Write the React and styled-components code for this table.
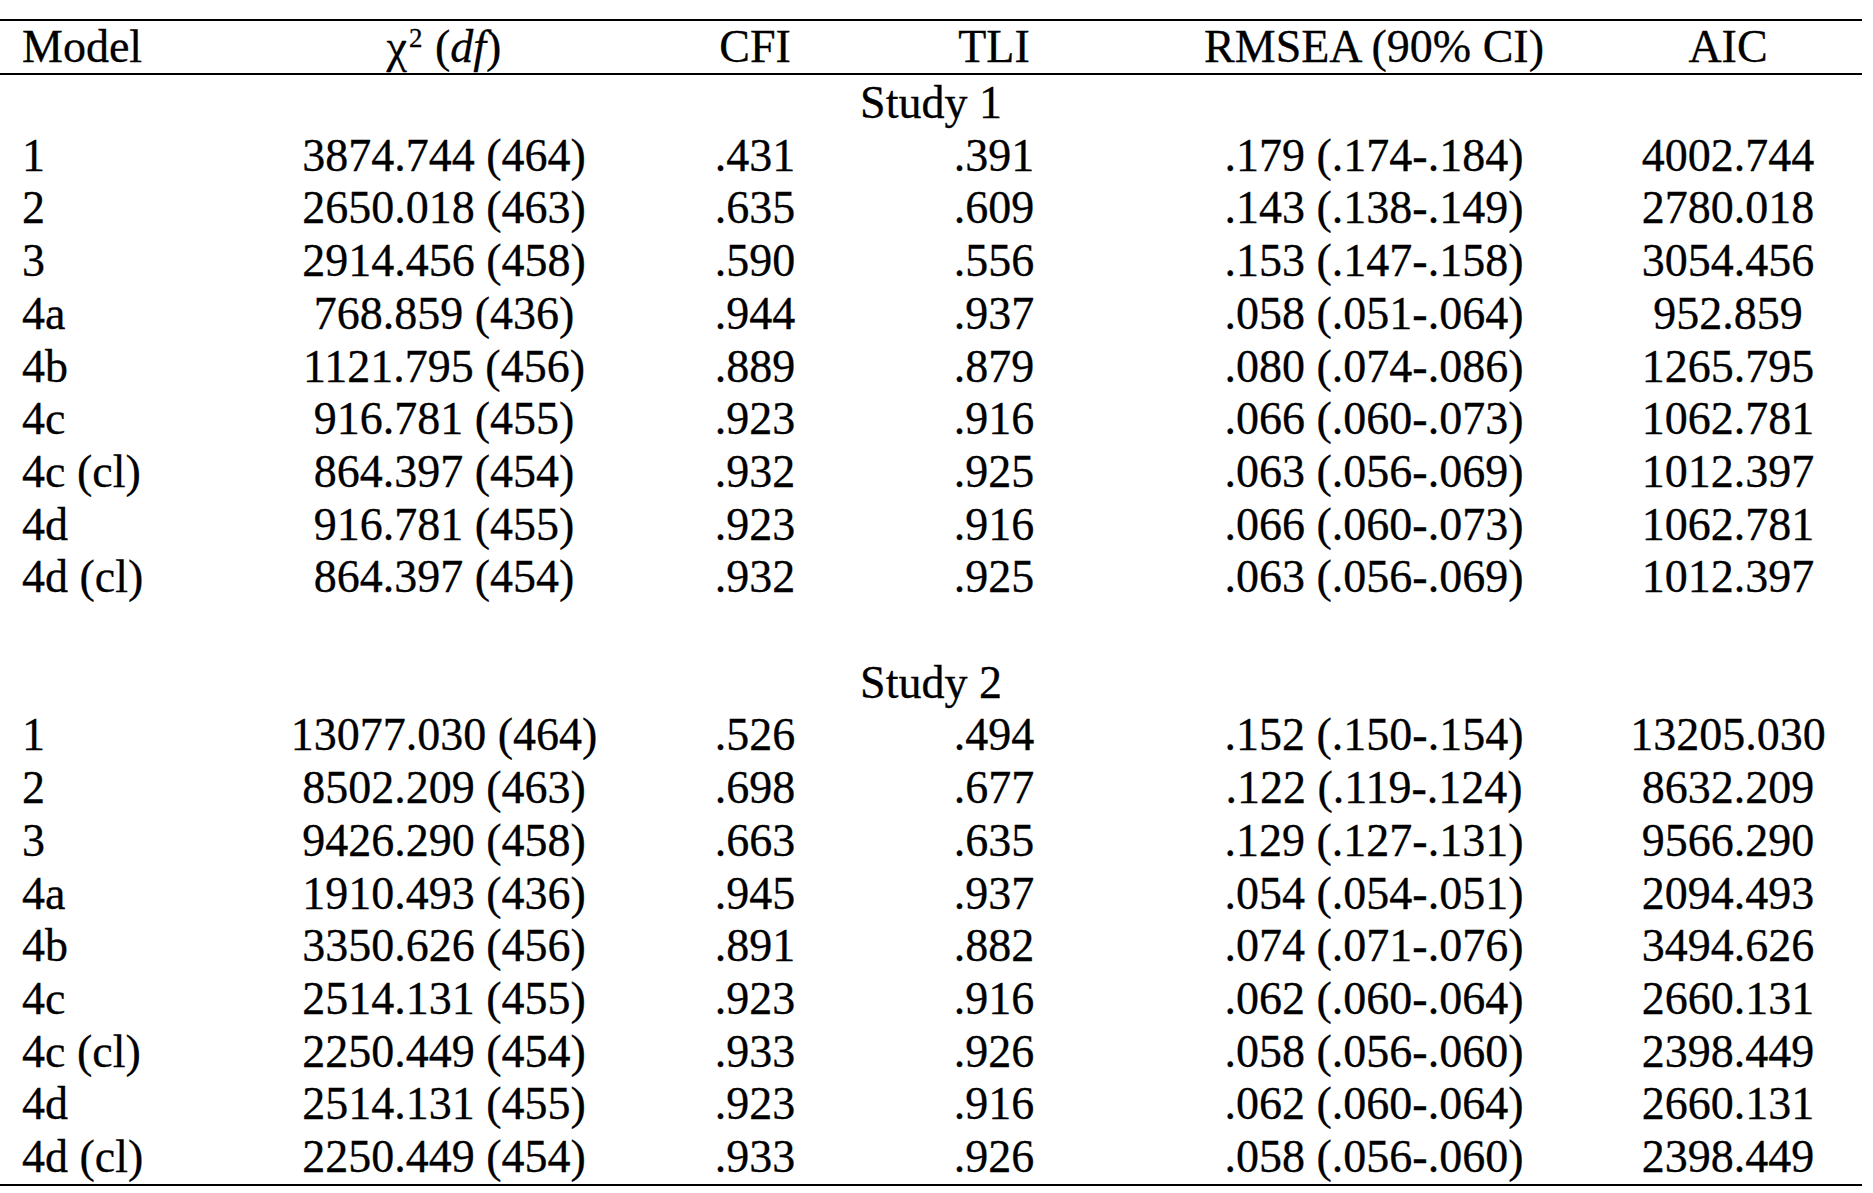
import React from 'react';
import styled, { createGlobalStyle } from 'styled-components';

const study1 = [
    ['1', '3874.744 (464)', '.431', '.391', '.179 (.174-.184)', '4002.744'],
    ['2', '2650.018 (463)', '.635', '.609', '.143 (.138-.149)', '2780.018'],
    ['3', '2914.456 (458)', '.590', '.556', '.153 (.147-.158)', '3054.456'],
    ['4a', '768.859 (436)', '.944', '.937', '.058 (.051-.064)', '952.859'],
    ['4b', '1121.795 (456)', '.889', '.879', '.080 (.074-.086)', '1265.795'],
    ['4c', '916.781 (455)', '.923', '.916', '.066 (.060-.073)', '1062.781'],
    ['4c (cl)', '864.397 (454)', '.932', '.925', '.063 (.056-.069)', '1012.397'],
    ['4d', '916.781 (455)', '.923', '.916', '.066 (.060-.073)', '1062.781'],
    ['4d (cl)', '864.397 (454)', '.932', '.925', '.063 (.056-.069)', '1012.397'],
];

const study2 = [
    ['1', '13077.030 (464)', '.526', '.494', '.152 (.150-.154)', '13205.030'],
    ['2', '8502.209 (463)', '.698', '.677', '.122 (.119-.124)', '8632.209'],
    ['3', '9426.290 (458)', '.663', '.635', '.129 (.127-.131)', '9566.290'],
    ['4a', '1910.493 (436)', '.945', '.937', '.054 (.054-.051)', '2094.493'],
    ['4b', '3350.626 (456)', '.891', '.882', '.074 (.071-.076)', '3494.626'],
    ['4c', '2514.131 (455)', '.923', '.916', '.062 (.060-.064)', '2660.131'],
    ['4c (cl)', '2250.449 (454)', '.933', '.926', '.058 (.056-.060)', '2398.449'],
    ['4d', '2514.131 (455)', '.923', '.916', '.062 (.060-.064)', '2660.131'],
    ['4d (cl)', '2250.449 (454)', '.933', '.926', '.058 (.056-.060)', '2398.449'],
];

// column widths measured off the reference
const colWidths = [212, 464, 158, 320, 440, 268];

const App = () => {
    const renderRows = (rows, key) =>
        rows.map((r, i) => (
            <Row key={key + i}>
                {r.map((cell, j) => (
                    <Cell key={j} $left={j === 0}>
                        {cell}
                    </Cell>
                ))}
            </Row>
        ));

    return (
        <>
            <GlobalStyle />
            <Page>
                <Table>
                    <colgroup>
                        {colWidths.map((w, i) => (
                            <col key={i} style={{ width: w }} />
                        ))}
                    </colgroup>
                    <thead>
                        <HeadRow>
                            <HeadCell $left>Model</HeadCell>
                            <HeadCell>
                                χ<Sup>2</Sup> (<i>df</i>)
                            </HeadCell>
                            <HeadCell>CFI</HeadCell>
                            <HeadCell>TLI</HeadCell>
                            <HeadCell>RMSEA (90% CI)</HeadCell>
                            <HeadCell>AIC</HeadCell>
                        </HeadRow>
                    </thead>
                    <Body>
                        <Row>
                            <Cell colSpan={6}>Study 1</Cell>
                        </Row>
                        {renderRows(study1, 's1-')}
                        <Row>
                            <Cell colSpan={6}>&nbsp;</Cell>
                        </Row>
                        <Row>
                            <Cell colSpan={6}>Study 2</Cell>
                        </Row>
                        {renderRows(study2, 's2-')}
                    </Body>
                </Table>
            </Page>
        </>
    );
};

const GlobalStyle = createGlobalStyle`
    html, body {
        margin: 0;
        padding: 0;
        background: #fff;
    }
`;

const Page = styled.div`
    padding-top: 19px;
    font-family: 'Liberation Serif', 'Times New Roman', serif;
    font-size: 46px;
    color: #000;
    -webkit-text-stroke: 0.3px #000;
`;

const Table = styled.table`
    width: 1862px;
    border-collapse: collapse;
    table-layout: fixed;
    border-bottom: 2px solid #000;
`;

const HeadRow = styled.tr`
    border-top: 2px solid #000;
    border-bottom: 2px solid #000;
`;

const HeadCell = styled.th`
    font-weight: normal;
    height: 52px;
    padding: 0 ${(p) => (p.$left ? '0 0 22px' : '0')};
    line-height: 52px;
    text-align: ${(p) => (p.$left ? 'left' : 'center')};
    white-space: nowrap;

    i {
        font-style: italic;
    }
`;

const Sup = styled.span`
    display: inline-block;
    font-size: 27px;
    line-height: 1;
    vertical-align: 15px;
    margin: 0 1px 0 2px;
`;

const Body = styled.tbody`
    & > tr:first-child > td {
        padding-top: 2px;
    }
`;

const Row = styled.tr``;

const Cell = styled.td`
    height: 52.7px;
    padding: 0 0 0 ${(p) => (p.$left ? '22px' : '0')};
    line-height: 52.7px;
    text-align: ${(p) => (p.$left ? 'left' : 'center')};
    white-space: nowrap;
`;

export default App;
